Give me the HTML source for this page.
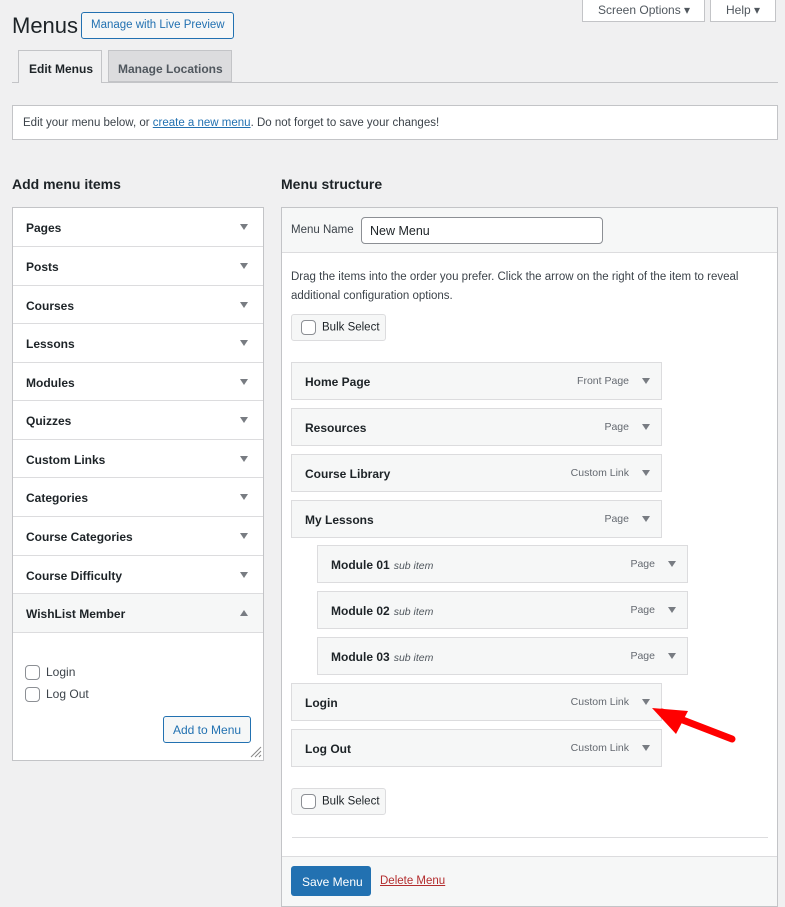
<!DOCTYPE html>
<html><head><meta charset="utf-8"><style>
*{box-sizing:border-box;margin:0;padding:0}
body{width:785px;height:901px;overflow:hidden;background:#f0f0f1;font-family:"Liberation Sans",sans-serif;color:#1d2327;font-size:13px;position:relative}
.a{position:absolute;white-space:nowrap}
.tri{width:0;height:0;border-left:4px solid transparent;border-right:4px solid transparent;border-top:6px solid #787c82;position:absolute}
.row{position:absolute;left:13px;width:250px;background:#fff;font-size:12px;font-weight:bold;padding:13px 0 0 13px;border-top:1px solid #dcdcde}
.row .tri{right:15px;top:16px}
.item{position:absolute;height:38px;width:371px;background:#f6f7f7;border:1px solid #dcdcde;font-weight:bold;font-size:12px;padding:12px 0 0 13px;white-space:nowrap}
.item .t{position:absolute;right:32px;top:12px;font-weight:normal;font-size:10.5px;color:#646970}
.item .tri{right:11px;top:15px}
.item i{font-weight:normal;font-size:10.5px;color:#50575e;margin-left:4px}
.cb{display:inline-block;width:15px;height:15px;border:1px solid #8c8f94;border-radius:4px;background:#fff;vertical-align:middle}
.bulk{position:absolute;left:291px;width:95px;height:27px;border:1px solid #dcdcde;border-radius:3px;background:#f6f7f7;font-size:11.5px;padding:5px 0 0 9px;white-space:nowrap}
.bulk .cb{margin-right:6px}
</style></head><body>
<div class="a" style="left:12px;top:13px;font-size:22px">Menus</div>
<div class="a" style="left:81px;top:12px;width:153px;height:27px;border:1px solid #2271b1;border-radius:3px;background:#f6f7f7;color:#2271b1;font-size:11.5px;padding:6px 0 0 9px">Manage with Live Preview</div>
<div class="a" style="left:582px;top:-3px;width:123px;height:25px;border:1px solid #c3c4c7;border-top:none;background:#fff;color:#50575e;font-size:12px;padding:6px 0 0 15px">Screen Options ▾</div>
<div class="a" style="left:710px;top:-3px;width:66px;height:25px;border:1px solid #c3c4c7;border-top:none;background:#fff;color:#50575e;font-size:12px;padding:6px 0 0 15px">Help ▾</div>
<div class="a" style="left:12px;top:82px;width:766px;border-top:1px solid #c3c4c7"></div>
<div class="a" style="left:18px;top:50px;width:84px;height:33px;border:1px solid #c3c4c7;border-bottom:none;background:#f0f0f1;font-weight:bold;font-size:12px;padding:11px 0 0 10px">Edit Menus</div>
<div class="a" style="left:108px;top:50px;width:124px;height:32px;border:1px solid #c3c4c7;background:#dcdcde;color:#50575e;font-weight:bold;font-size:12px;padding:11px 0 0 9px">Manage Locations</div>
<div class="a" style="left:12px;top:105px;width:766px;height:35px;background:#fff;border:1px solid #c3c4c7;font-size:11.5px;padding:11px 0 0 10px;color:#3c434a">Edit your menu below, or <span style="color:#2271b1;text-decoration:underline">create a new menu</span>. Do not forget to save your changes!</div>
<div class="a" style="left:12px;top:176px;font-size:14px;font-weight:bold">Add menu items</div>
<div class="a" style="left:281px;top:176px;font-size:14px;font-weight:bold">Menu structure</div>
<div class="a" style="left:12px;top:207px;width:252px;height:554px;border:1px solid #c3c4c7;background:#fff"></div>
<div class="row" style="top:208px;height:39px;border-top:none;padding-top:13px">Pages<div class="tri"></div></div>
<div class="row" style="top:246px;height:39px">Posts<div class="tri"></div></div>
<div class="row" style="top:285px;height:39px">Courses<div class="tri"></div></div>
<div class="row" style="top:323px;height:39px">Lessons<div class="tri"></div></div>
<div class="row" style="top:362px;height:39px">Modules<div class="tri"></div></div>
<div class="row" style="top:400px;height:39px">Quizzes<div class="tri"></div></div>
<div class="row" style="top:439px;height:39px">Custom Links<div class="tri"></div></div>
<div class="row" style="top:477px;height:40px">Categories<div class="tri"></div></div>
<div class="row" style="top:516px;height:40px">Course Categories<div class="tri"></div></div>
<div class="row" style="top:555px;height:39px">Course Difficulty<div class="tri"></div></div>
<div class="row" style="top:593px;height:40px;background:#f6f7f7;border-bottom:1px solid #dcdcde">WishList Member<div class="tri" style="border-top:none;border-bottom:6px solid #787c82"></div></div>
<div class="a" style="left:25px;top:665px;font-size:12px;color:#3c434a"><span class="cb" style="margin-right:6px"></span>Login</div>
<div class="a" style="left:25px;top:687px;font-size:12px;color:#3c434a"><span class="cb" style="margin-right:6px"></span>Log Out</div>
<div class="a" style="left:163px;top:716px;width:88px;height:27px;border:1px solid #2271b1;border-radius:3px;background:#f6f7f7;color:#2271b1;font-size:12px;padding:6px 0 0 9px">Add to Menu</div>
<svg class="a" style="left:248px;top:744px" width="14" height="14"><path d="M13 3L3 13M13 7L7 13M13 11L11 13" stroke="#888" stroke-width="1"/></svg>

<div class="a" style="left:281px;top:207px;width:497px;height:700px;border:1px solid #c3c4c7;background:#fff"></div>
<div class="a" style="left:282px;top:208px;width:495px;height:45px;background:#f6f7f7;border-bottom:1px solid #dcdcde"></div>
<div class="a" style="left:291px;top:224px;font-size:11.5px;color:#3c434a">Menu Name</div>
<div class="a" style="left:361px;top:217px;width:242px;height:27px;border:1px solid #8c8f94;border-radius:4px;background:#fff;font-size:12.5px;padding:6px 0 0 8px">New Menu</div>
<div class="a" style="left:291px;top:268px;font-size:11.5px;line-height:19px;color:#3c434a;width:480px;white-space:normal">Drag the items into the order you prefer. Click the arrow on the right of the item to reveal additional configuration options.</div>
<div class="bulk" style="top:314px"><span class="cb"></span>Bulk Select</div>
<div class="item" style="left:291px;top:362px">Home Page<span class="t">Front Page</span><div class="tri"></div></div>
<div class="item" style="left:291px;top:408px">Resources<span class="t">Page</span><div class="tri"></div></div>
<div class="item" style="left:291px;top:454px">Course Library<span class="t">Custom Link</span><div class="tri"></div></div>
<div class="item" style="left:291px;top:500px">My Lessons<span class="t">Page</span><div class="tri"></div></div>
<div class="item" style="left:317px;top:545px">Module 01<i>sub item</i><span class="t">Page</span><div class="tri"></div></div>
<div class="item" style="left:317px;top:591px">Module 02<i>sub item</i><span class="t">Page</span><div class="tri"></div></div>
<div class="item" style="left:317px;top:637px">Module 03<i>sub item</i><span class="t">Page</span><div class="tri"></div></div>
<div class="item" style="left:291px;top:683px">Login<span class="t">Custom Link</span><div class="tri"></div></div>
<div class="item" style="left:291px;top:729px">Log Out<span class="t">Custom Link</span><div class="tri"></div></div>
<svg class="a" style="left:640px;top:700px" width="110" height="50"><path d="M22 12L92 39" stroke="#f00" stroke-width="7" stroke-linecap="round"/><path d="M12 8L48 11L36 34Z" fill="#f00"/></svg>
<div class="bulk" style="top:788px"><span class="cb"></span>Bulk Select</div>
<div class="a" style="left:292px;top:837px;width:476px;border-top:1px solid #dcdcde"></div>
<div class="a" style="left:282px;top:856px;width:495px;height:50px;background:#f6f7f7;border-top:1px solid #dcdcde"></div>
<div class="a" style="left:291px;top:866px;width:80px;height:30px;background:#2271b1;border-radius:3px;color:#fff;font-size:12px;padding:9px 0 0 11px">Save Menu</div>
<div class="a" style="left:380px;top:875px;color:#b32d2e;text-decoration:underline;font-size:11.5px">Delete Menu</div>
</body></html>
